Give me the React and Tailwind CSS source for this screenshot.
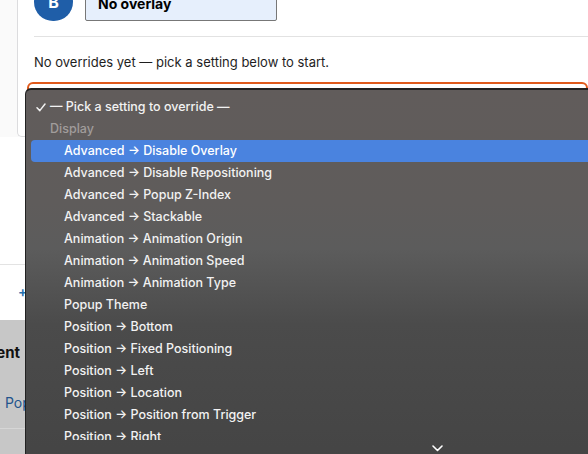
import React from 'react';

const options = [
  'Advanced → Disable Overlay',
  'Advanced → Disable Repositioning',
  'Advanced → Popup Z-Index',
  'Advanced → Stackable',
  'Animation → Animation Origin',
  'Animation → Animation Speed',
  'Animation → Animation Type',
  'Popup Theme',
  'Position → Bottom',
  'Position → Fixed Positioning',
  'Position → Left',
  'Position → Location',
  'Position → Position from Trigger',
  'Position → Right',
];

function Check() {
  return (
    <svg width="10" height="9" viewBox="0 0 10 9" fill="none">
      <path d="M1 4.8 L3.8 7.6 L9 1" stroke="#f2f2f2" strokeWidth="1.5" strokeLinecap="round" strokeLinejoin="round" />
    </svg>
  );
}

function SelectMenu() {
  return (
    <div className="absolute left-[25px] top-[88px] w-[824px] h-[380px] rounded-tl-[6px] border-l border-t-2 border-[#222] bg-[linear-gradient(180deg,#615c5b_0%,#5f5c5b_30%,#5c5c5c_42%,#4b4b4b_62%,#444444_100%)] text-[12.5px] font-medium text-[#f2f2f2]">
      <div className="h-[350px] overflow-hidden pt-[6px]">
        <div className="h-[22px] flex items-center gap-[4px] pl-[10px]">
          <Check />
          <span>— Pick a setting to override —</span>
        </div>
        <div className="h-[22px] flex items-center pl-[24px] text-[#a19d9b]">Display</div>
        {options.map((opt, i) =>
          i === 0 ? (
            <div key={opt} className="h-[22px] mx-[5px] rounded-[4px] bg-[#4a83df] flex items-center pl-[33px] text-white">
              {opt}
            </div>
          ) : (
            <div key={opt} className="h-[22px] flex items-center pl-[38px]">
              {opt}
            </div>
          )
        )}
      </div>
      <div className="flex justify-center pt-[5px]">
        <svg width="11" height="7" viewBox="0 0 11 7" fill="none">
          <path d="M1 1 L5.5 5.5 L10 1" stroke="#fff" strokeWidth="1.6" strokeLinecap="round" strokeLinejoin="round" />
        </svg>
      </div>
    </div>
  );
}

export default function App() {
  return (
    <div className="relative w-[588px] h-[454px] overflow-hidden bg-white font-['Inter',sans-serif] text-[#1e1e1e]">
      {/* settings card */}
      <div className="h-[137px] bg-[#fafafa] flex flex-col">
        <div className="ml-[17px] h-full border-l border-b border-[#dcdcde] rounded-bl-[5px] bg-white pl-[16px] flex flex-col">
          <div className="flex items-end gap-[12px] -mt-[17px]">
            <div className="w-[39px] h-[38px] rounded-full bg-[#1f5ea8] flex items-center justify-center text-white font-bold text-[16px]">
              B
            </div>
            <div className="w-[192px] h-[36px] border border-[#777] rounded-[2px] bg-[#e6effc] flex items-center pl-[12px] font-bold text-[14px] text-black">
              No overlay
            </div>
          </div>
          <div className="mt-[15px] border-t border-[#e2e2e2]" />
          <p className="mt-[15px] h-[20px] leading-[20px] text-[13px]">No overrides yet — pick a setting below to start.</p>
          <div className="mt-[10px] -ml-[7px] h-[40px] rounded-[6px] border-2 border-[#e05a1c] bg-white" />
        </div>
      </div>

      {/* below the card */}
      <div className="h-[128px] border-b border-[#e3e3e3]" />
      <div className="h-[55px] flex items-center pl-[18px] text-[14px] font-semibold text-[#2271b1]">
        + Add setting override
      </div>

      {/* dimmed lower section */}
      <div className="h-[134px] bg-[#c7c7c7] pt-[23px]">
        <div className="w-[20px] h-[20px] flex justify-end overflow-hidden whitespace-nowrap">
          <span className="text-[15px] font-bold leading-[20px] text-[#111]">Assignment</span>
        </div>
        <div className="mt-[30px] h-[20px] pl-[5px] leading-[20px] text-[14px] text-[#23548c] whitespace-nowrap">
          Popup Settings
        </div>
        <div className="mt-[15px] border-t border-[#d6d6d6]" />
      </div>

      <SelectMenu />
    </div>
  );
}
